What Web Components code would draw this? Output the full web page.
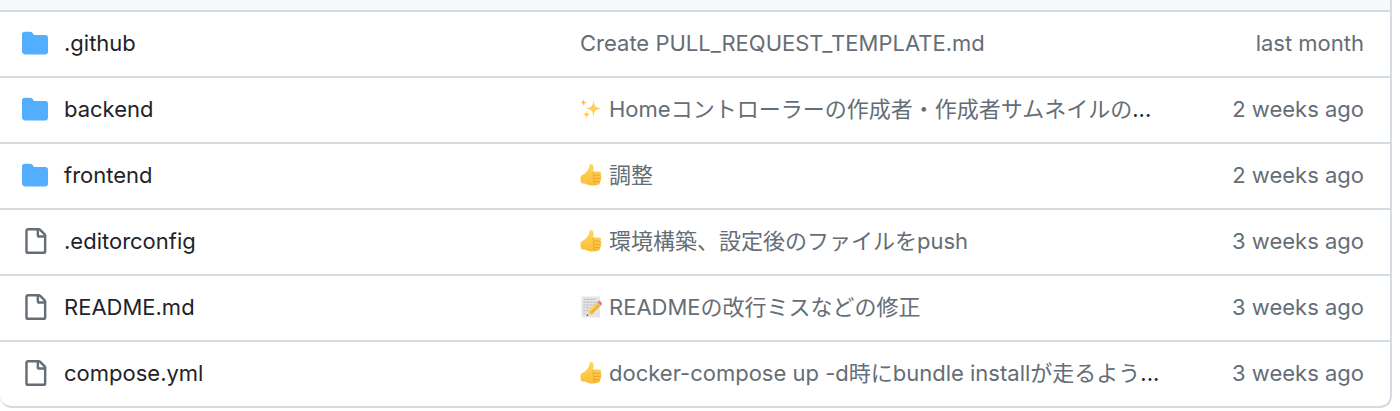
<!DOCTYPE html>
<html lang="ja">
<head>
<meta charset="utf-8">
<title>Repository files</title>
<style>
  body { margin: 0; background: #fff; font-family: Inter, "Noto Sans CJK JP", sans-serif; }
</style>
</head>
<body>
<repo-files></repo-files>

<template id="icon-folder">
  <svg viewBox="0 0 16 16" width="26" height="26" fill="#54aeff"><path d="M1.75 1A1.75 1.75 0 0 0 0 2.75v10.5C0 14.216.784 15 1.75 15h12.5A1.75 1.75 0 0 0 16 13.25v-8.5A1.75 1.75 0 0 0 14.25 3H7.5a.25.25 0 0 1-.2-.1l-.9-1.2C6.07 1.26 5.55 1 5 1H1.75Z"/></svg>
</template>
<template id="icon-file">
  <svg viewBox="0 0 16 16" width="26" height="26" fill="#656d76"><path d="M2 1.75C2 .784 2.784 0 3.75 0h6.586c.464 0 .909.184 1.237.513l2.914 2.914c.329.328.513.773.513 1.237v9.586A1.75 1.75 0 0 1 13.25 16h-9.5A1.75 1.75 0 0 1 2 14.25Zm1.75-.25a.25.25 0 0 0-.25.25v12.5c0 .138.112.25.25.25h9.5a.25.25 0 0 0 .25-.25V6h-2.75A1.75 1.75 0 0 1 9 4.25V1.5Zm6.75.062V4.25c0 .138.112.25.25.25h2.688l-.011-.013-2.914-2.914-.013-.011Z"/></svg>
</template>
<template id="icon-sparkles">
  <svg viewBox="0 0 22 22" width="22" height="22" fill="#fdd05a"><path d="M13.5 2C14.2 7.8 15.2 9.6 21 10.5C15.2 11.4 14.2 13.2 13.5 19C12.8 13.2 11.8 11.4 6 10.5C11.8 9.6 12.8 7.8 13.5 2Z"/><path fill="#f8b84a" d="M3.5 1C3.9 3.6 4.4 4.1 7 4.6C4.4 5.1 3.9 5.6 3.5 8.2C3.1 5.6 2.6 5.1 0 4.6C2.6 4.1 3.1 3.6 3.5 1Z"/><path d="M6.5 12.2C6.9 15.3 7.6 16 10.2 16.5C7.6 17 6.9 17.7 6.5 20.8C6.1 17.7 5.4 17 2.8 16.5C5.4 16 6.1 15.3 6.5 12.2Z"/></svg>
</template>
<template id="icon-thumb">
  <svg viewBox="0 0 22 22" width="22" height="22">
    <defs><linearGradient id="skin" x1="0" y1="0" x2="0" y2="1"><stop offset="0" stop-color="#ffd75c"/><stop offset="1" stop-color="#fcbd38"/></linearGradient></defs>
    <path fill="url(#skin)" d="M.8 12.2C2.2 10.6 4.2 10.4 5.6 8.8C7.6 6.8 9 5 9.3 2.2C9.4.4 10.6-.3 11.9.3C14 1.4 13.9 4.9 12.9 7.6H19C21 7.6 21.7 9.9 20.4 10.9C22 11.6 21.9 13.7 20.5 14.3C21.6 15.2 21.2 17 19.8 17.5C20.4 18.9 19.5 20.4 18 20.7C14.5 21.8 9.5 21.9 6.7 20.2C4.8 19.2 2.8 20.2 1.5 18.9C.4 17.6.3 14 .8 12.2Z"/>
    <path fill="none" stroke="#e39a26" stroke-width=".7" stroke-linecap="round" d="M14.2 11.1H20M14.2 14.4H20.2M14.4 17.6H19.4M13.8 8C12.4 8.8 12.6 10.6 14.2 11.1C12.7 12 12.8 13.8 14.2 14.4C13 15.4 13 17 14.4 17.6C13.4 18.7 14 20 15.5 20.6"/>
  </svg>
</template>
<template id="icon-memo">
  <svg viewBox="0 0 22 22" width="22" height="22">
    <path fill="#e5e5e7" d="M1.5.5H20V21.5H1.5Z"/>
    <path stroke="#b4b4b8" stroke-width=".9" stroke-dasharray="2 .6 3.2 .7" d="M4 3.4H15M3.5 6.2H17M3.5 9H15M3.5 11.8H11M3.5 14.6H8M3.5 17.4H6"/>
    <path fill="#f5b52a" d="M8.2 15.2L16.6 6.8L20.1 10.3L11.6 18.7Z"/>
    <path fill="#ffd65a" d="M8.2 15.2L16.6 6.8L17.9 8.1L9.5 16.5Z"/>
    <path fill="#f2d4a0" d="M8.2 15.2L11.6 18.7L6.6 20Z"/>
    <path fill="#4c4548" d="M7.1 18.1L8.5 19.5L6.4 20.1Z"/>
    <path fill="#b9c3ca" d="M16.4 7L17.5 5.9L21 9.4L19.9 10.5Z"/>
    <path fill="#ec7770" d="M17.5 5.9L18.5 4.9Q19.4 4.5 20.6 5.5L21.5 6.6Q22.3 7.5 21.6 8.7L21 9.4Z"/>
  </svg>
</template>

<template id="repo-files">
  <style>
    :host { display: block; padding-right: 8px; }
    .box { border: 2px solid #d4dbe2; border-width: 0 2px 2px 0; border-radius: 0 0 12px 12px; overflow: hidden; }
    .head { height: 10px; background: #f6f8fa; }
    table { width: 100%; table-layout: fixed; border-collapse: separate; border-spacing: 0; font-size: 22px; line-height: 32px; color: #1f2328; }
    td { padding: 15px 0 17px; border-top: 2px solid #d4dbe2; white-space: nowrap; vertical-align: middle; }
    .name { width: 558px; padding-left: 22px; }
    .age { width: 200px; padding-right: 26px; text-align: right; color: #656d76; }
  </style>
  <div class="box">
    <div class="head"></div>
    <table aria-label="Files"><tbody></tbody></table>
  </div>
</template>

<template id="file-entry">
  <style>
    :host { display: block; }
    a { display: flex; align-items: center; gap: 16px; color: inherit; text-decoration: none; }
  </style>
  <a href="#"><repo-icon></repo-icon><slot></slot></a>
</template>

<template id="commit-message">
  <style>
    :host { display: flex; align-items: center; overflow: hidden; }
    a { display: flex; align-items: center; gap: 7px; color: #656d76; text-decoration: none; }
  </style>
  <a href="#"><slot></slot></a><slot name="more"></slot>
</template>

<script>
  const stamp = (host, id) => {
    const root = host.attachShadow({ mode: "open" });
    root.append(document.getElementById(id).content.cloneNode(true));
    return root;
  };

  customElements.define("repo-icon", class extends HTMLElement {
    static observedAttributes = ["name"];
    attributeChangedCallback(_, __, name) {
      const root = this.shadowRoot || this.attachShadow({ mode: "open" });
      root.innerHTML = "<style>:host{display:block;flex:none}svg{display:block}</style>";
      root.append(document.getElementById("icon-" + name).content.cloneNode(true));
    }
  });

  customElements.define("file-entry", class extends HTMLElement {
    connectedCallback() {
      if (this.shadowRoot) return;
      stamp(this, "file-entry").querySelector("repo-icon").setAttribute("name", this.getAttribute("kind"));
    }
  });

  customElements.define("commit-message", class extends HTMLElement {
    connectedCallback() {
      if (!this.shadowRoot) stamp(this, "commit-message");
    }
  });

  const files = [
    ["folder", ".github", "", "Create PULL_REQUEST_TEMPLATE.md", false, "last month"],
    ["folder", "backend", "sparkles", "Homeコントローラーの作成者・作成者サムネイルの", true, "2 weeks ago"],
    ["folder", "frontend", "thumb", "調整", false, "2 weeks ago"],
    ["file", ".editorconfig", "thumb", "環境構築、設定後のファイルをpush", false, "3 weeks ago"],
    ["file", "README.md", "memo", "READMEの改行ミスなどの修正", false, "3 weeks ago"],
    ["file", "compose.yml", "thumb", "docker-compose up -d時にbundle installが走るよう", true, "3 weeks ago"]
  ];

  customElements.define("repo-files", class extends HTMLElement {
    connectedCallback() {
      if (this.shadowRoot) return;
      stamp(this, "repo-files").querySelector("tbody").innerHTML = files.map(
        ([kind, name, emoji, message, cut, age]) => `<tr>
          <td class="name"><file-entry kind="${kind}">${name}</file-entry></td>
          <td><commit-message>${emoji ? `<repo-icon name="${emoji}"></repo-icon>` : ""}<span>${message}</span>${cut ? `<span slot="more">...</span>` : ""}</commit-message></td>
          <td class="age">${age}</td>
        </tr>`).join("");
    }
  });
</script>
</body>
</html>
